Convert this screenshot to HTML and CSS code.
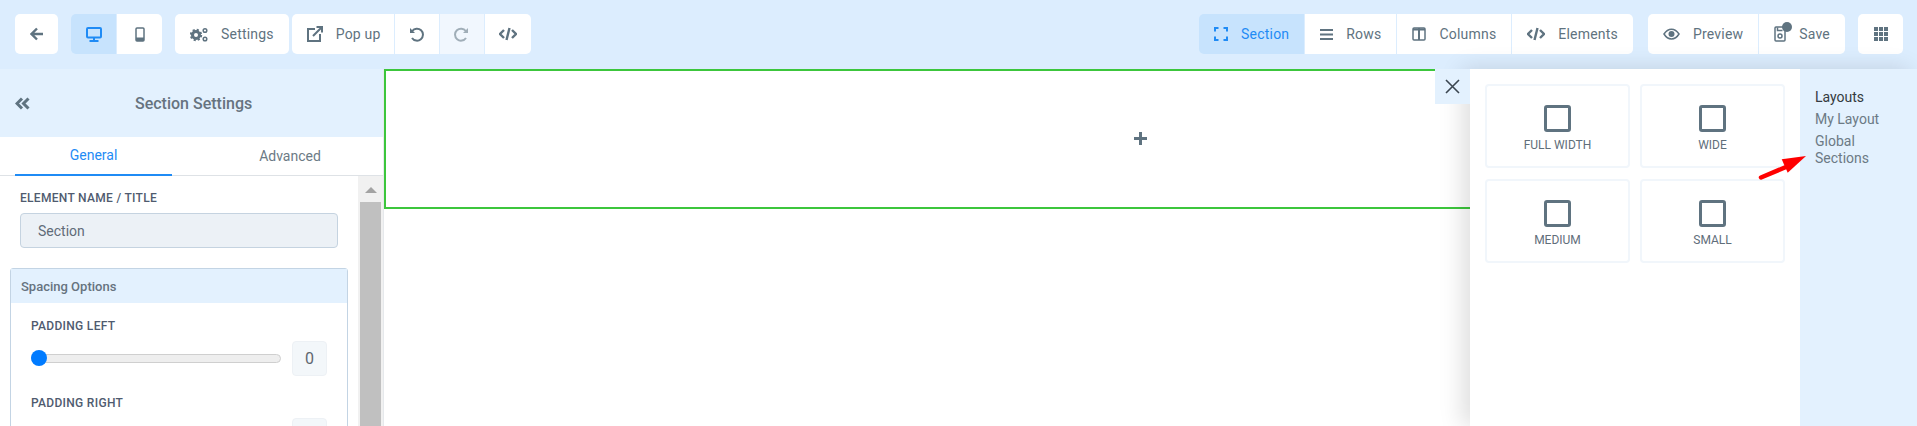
FILE: index.html
```html
<!DOCTYPE html>
<html lang="en">
<head>
    <meta charset="UTF-8">
    <title>Page Builder</title>
    <link rel="stylesheet" href="styles.css">
</head>
<body>

<header class="toolbar">
    <div class="group">
        <button class="tool icon-only narrow">
            <svg width="14" height="14" viewBox="0 0 14 14"><path d="M13 7H2M7 1.500 1.500 7 7 12.500" class="line heavy"/></svg>
        </button>
    </div>
    <div class="group">
        <button class="tool icon-only active">
            <svg width="16" height="15" viewBox="0 0 16 15"><rect x="1" y="1" width="14" height="9.500" rx="1" class="line thick"/><path d="M8 11v2M3.500 14h9" class="line thick"/></svg>
        </button>
        <button class="tool icon-only">
            <svg width="10" height="15" viewBox="0 0 10 15"><rect x="1" y="1" width="8" height="13" rx="1" class="line"/><rect x="1" y="10.500" width="8" height="3.500" fill="#5f7380"/></svg>
        </button>
    </div>
    <div class="group">
        <button class="tool">
            <svg width="18" height="15" viewBox="0 0 18 15"><circle cx="6" cy="8" r="3.500" class="line cog"/><circle cx="6" cy="8" r="5.200" class="teeth"/><circle cx="15" cy="3.500" r="1.800" class="line"/><circle cx="15" cy="12" r="1.800" class="line"/></svg>
            Settings
        </button>
    </div>
    <div class="group spaced">
        <button class="tool popup">
            <svg width="16" height="16" viewBox="0 0 16 16"><path d="M8 3H1v12h12V8" class="line thick"/><path d="M6 10l8-8M9.500 1H15v5.500" class="line thick"/></svg>
            Pop up
        </button>
        <button class="tool icon-only slim">
            <svg width="15" height="15" viewBox="0 0 15 15"><path d="M3.200 4A6 6 0 1 1 3 11" class="line thick"/><path d="M1 1v5h5z" fill="#5f7380"/></svg>
        </button>
        <button class="tool icon-only slim disabled">
            <svg width="15" height="15" viewBox="0 0 15 15"><path d="M11.800 4A6 6 0 1 0 12 11" class="line thick"/><path d="M14 1v5H9z" fill="#5f7380"/></svg>
        </button>
        <button class="tool icon-only wide">
            <svg width="18" height="14" viewBox="0 0 18 14"><path d="M5 3 1 7l4 4M13 3l4 4-4 4M10.500 1 7.500 13" class="line heavy"/></svg>
        </button>
    </div>

    <div class="group push">
        <button class="tool active">
            <svg width="14" height="14" viewBox="0 0 14 14"><path d="M1 4.500V1h3.500M9.500 1H13v3.500M13 9.500V13H9.500M4.500 13H1V9.500" class="line thick blue"/></svg>
            Section
        </button>
        <button class="tool">
            <svg width="13" height="13" viewBox="0 0 13 13"><path d="M0 2h13M0 6.500h13M0 11h13" class="line thick"/></svg>
            Rows
        </button>
        <button class="tool">
            <svg width="14" height="14" viewBox="0 0 14 14"><rect x="1" y="1" width="12" height="12" rx="1" class="line"/><path d="M1 2.500h12M7 1v12" class="line thick"/></svg>
            Columns
        </button>
        <button class="tool">
            <svg width="18" height="14" viewBox="0 0 18 14"><path d="M5 3 1 7l4 4M13 3l4 4-4 4M10.500 1 7.500 13" class="line heavy"/></svg>
            Elements
        </button>
    </div>
    <div class="group">
        <button class="tool">
            <svg width="17" height="12" viewBox="0 0 17 12"><path d="M1 6c4-6.500 11-6.500 15 0-4 6.500-11 6.500-15 0z" class="line"/><circle cx="8.500" cy="6" r="3" fill="#5f7380"/></svg>
            Preview
        </button>
        <button class="tool save">
            <svg width="12" height="16" viewBox="0 0 12 16"><rect x="1" y="1" width="10" height="14" rx="1" class="line"/><path d="M3.500 1.500v3h5" class="line"/><circle cx="6" cy="10" r="2" class="line"/></svg>
            <span class="dot"></span>
            Save
        </button>
    </div>
    <div class="group">
        <button class="tool icon-only">
            <svg width="14" height="14" viewBox="0 0 14 14" fill="#5f7380"><rect width="4" height="4"/><rect x="5" width="4" height="4"/><rect x="10" width="4" height="4"/><rect y="5" width="4" height="4"/><rect x="5" y="5" width="4" height="4"/><rect x="10" y="5" width="4" height="4"/><rect y="10" width="4" height="4"/><rect x="5" y="10" width="4" height="4"/><rect x="10" y="10" width="4" height="4"/></svg>
        </button>
    </div>
</header>

<div class="workspace">
    <aside class="settings">
        <div class="settings-head">
            <svg width="15" height="13" viewBox="0 0 15 13"><path d="M7 1.500 2 6.500l5 5M13.500 1.500l-5 5 5 5" class="line heavier"/></svg>
            <h2>Section Settings</h2>
        </div>
        <div class="tabs">
            <div class="tab current">General</div>
            <div class="tab">Advanced</div>
        </div>
        <div class="settings-body">
            <div class="fields">
                <label class="field-label">ELEMENT NAME / TITLE</label>
                <div class="text-input">Section</div>

                <div class="option-card">
                    <div class="option-title">Spacing Options</div>
                    <div class="option-body">
                        <label class="field-label">PADDING LEFT</label>
                        <div class="slider-row">
                            <div class="slider"><span class="thumb"></span></div>
                            <div class="value">0</div>
                        </div>
                        <label class="field-label">PADDING RIGHT</label>
                        <div class="slider-row">
                            <div class="slider"><span class="thumb"></span></div>
                            <div class="value"></div>
                        </div>
                    </div>
                </div>
            </div>
            <div class="scrollbar">
                <span class="scroll-up"></span>
                <span class="scroll-thumb"></span>
            </div>
        </div>
    </aside>

    <main class="canvas">
        <div class="section-box">
            <svg class="add" width="13" height="13" viewBox="0 0 13 13"><path d="M6.500 0v13M0 6.500h13" class="line cog"/></svg>
        </div>
    </main>

    <!-- Layout drawer sits over the canvas -->
    <div class="drawer">
        <button class="close">
            <svg width="15" height="15" viewBox="0 0 15 15"><path d="M1 1l13 13M14 1 1 14" class="line dark"/></svg>
        </button>
        <div class="layouts">
            <div class="layout-card"><span class="square"></span>FULL WIDTH</div>
            <div class="layout-card"><span class="square"></span>WIDE</div>
            <div class="layout-card"><span class="square"></span>MEDIUM</div>
            <div class="layout-card"><span class="square"></span>SMALL</div>
        </div>
        <nav class="layout-nav">
            <a class="selected">Layouts</a>
            <a>My Layout</a>
            <a>Global Sections</a>
        </nav>
        <svg class="arrow" width="50" height="30" viewBox="0 0 50 30"><path d="M3 25.500 28 15" stroke="#f00" stroke-width="4.500" stroke-linecap="round" fill="none"/><path d="M48 4 23.700 7.300 29.700 20.700z" fill="#f00"/></svg>
    </div>
</div>

</body>
</html>
```

FILE: styles.css
```css
* {
    box-sizing: border-box;
}
body {
    font-family: Roboto, Arial, sans-serif;
    margin: 0;
    padding: 0;
    width: 1917px;
    height: 426px;
    overflow: hidden;
    position: relative;
    background-color: white;
    color: #5f7380;
}
.line {
    fill: none;
    stroke: #5f7380;
    stroke-width: 1.5;
}
.line.thick {
    stroke-width: 2;
}
.line.heavy {
    stroke-width: 2.4;
}
.line.heavier {
    stroke-width: 3;
}
.line.cog {
    stroke-width: 3;
}
.line.dark {
    stroke: #3b4650;
    stroke-width: 1.6;
}
.teeth {
    fill: none;
    stroke: #5f7380;
    stroke-width: 2;
    stroke-dasharray: 2.1 2;
}

/* Top toolbar */
.toolbar {
    display: flex;
    align-items: center;
    gap: 13px;
    height: 69px;
    padding: 0 14px 1px 15px;
    background-color: #dcedfe;
}
.group {
    display: flex;
    gap: 1px;
    height: 40px;
    border-radius: 5px;
    overflow: hidden;
}
.group.spaced {
    margin-left: -10px;
}
.group.push {
    margin-left: auto;
    margin-right: 2px;
}
.tool {
    position: relative;
    display: flex;
    align-items: center;
    gap: 13px;
    height: 40px;
    padding: 0 15px;
    border: none;
    background-color: white;
    color: #5f7380;
    font-family: inherit;
    font-size: 14px;
    letter-spacing: 0.2px;
}
.tool.popup {
    padding-right: 13px;
}
.tool.icon-only {
    justify-content: center;
    width: 45px;
    padding: 0;
}
.tool.narrow {
    width: 43px;
}
.tool.slim {
    width: 44px;
}
.tool.wide {
    width: 46px;
}
.tool.active {
    background-color: #c7e3fd;
    color: #1f8bf5;
}
.tool.active .line {
    stroke: #1f8bf5;
}
.tool.disabled {
    background-color: #f1f7fe;
}
.tool.disabled svg {
    opacity: 0.55;
}
.save .dot {
    position: absolute;
    left: 23px;
    top: 8px;
    width: 10px;
    height: 10px;
    border-radius: 50%;
    background-color: #5f7380;
}

/* Workspace */
.workspace {
    display: flex;
    height: 357px;
}
.settings {
    display: flex;
    flex-direction: column;
    width: 384px;
    flex-shrink: 0;
    border-right: 1px solid #e6e9ec;
}
.settings-head {
    position: relative;
    display: flex;
    align-items: center;
    height: 68px;
    padding-left: 15px;
    background-color: #e3f1fe;
}
.settings-head h2 {
    margin: 0 0 0 105px;
    font-size: 16px;
    font-weight: 500;
    color: #66737f;
}
.tabs {
    display: flex;
    height: 39px;
    padding: 0 15px;
    border-bottom: 1px solid #dee2e6;
    font-size: 14px;
}
.tab {
    display: flex;
    align-items: center;
    justify-content: center;
    height: 39px;
    flex: 1;
    padding: 0 0 1px 40px;
    color: #6c7a85;
}
.tab.current {
    flex: 0 0 157px;
    padding-left: 0;
    color: #1f8bf5;
    border-bottom: 2px solid #1f8bf5;
}
.settings-body {
    display: flex;
    flex: 1;
    min-height: 0;
}
.fields {
    flex: 1;
    overflow: hidden;
    padding: 15px 10px 0;
}
.field-label {
    display: block;
    font-size: 12px;
    font-weight: 500;
    line-height: 14px;
    letter-spacing: 0.3px;
    color: #4f5b6f;
}
.text-input {
    display: flex;
    align-items: center;
    width: 318px;
    height: 35px;
    margin: 8px 0 20px 10px;
    padding-left: 17px;
    border: 1px solid #c5d3e0;
    border-radius: 4px;
    background-color: #ecf1f6;
    font-size: 14px;
    color: #606b78;
}
.fields > .field-label {
    margin-left: 10px;
}
.option-card {
    width: 338px;
    border: 1px solid #c3d4e4;
    border-radius: 3px 3px 0 0;
}
.option-title {
    display: flex;
    align-items: center;
    height: 34px;
    padding-left: 10px;
    background-color: #e3f1fe;
    font-size: 13px;
    font-weight: 500;
    color: #66737f;
}
.option-body {
    padding: 16px 20px 0;
}
.slider-row {
    display: flex;
    align-items: center;
    gap: 11px;
    margin: 8px 0 20px;
}
.slider {
    position: relative;
    width: 250px;
    height: 9px;
    border: 1px solid #cfcfcf;
    border-radius: 5px;
    background-color: #eee;
}
.thumb {
    position: absolute;
    left: -1px;
    top: -5px;
    width: 16px;
    height: 16px;
    border-radius: 50%;
    background-color: #007bff;
}
.value {
    display: flex;
    align-items: center;
    justify-content: center;
    width: 35px;
    height: 35px;
    border: 1px solid #edf1f5;
    border-radius: 4px;
    background-color: #f3f7fa;
    font-size: 16px;
    color: #5f6770;
}
.scrollbar {
    display: flex;
    flex-direction: column;
    align-items: center;
    width: 25px;
    padding: 0 2px;
    background-color: #f1f1f1;
}
.scroll-up {
    width: 0;
    height: 0;
    margin: 11px 0 9px;
    border-left: 6px solid transparent;
    border-right: 6px solid transparent;
    border-bottom: 6px solid #a3a3a3;
}
.scroll-thumb {
    flex: 1;
    width: 21px;
    background-color: #c0c0c0;
}
.canvas {
    flex: 1;
    min-width: 0;
}
.section-box {
    display: flex;
    align-items: center;
    justify-content: center;
    width: 1511px;
    height: 140px;
    padding-bottom: 2px;
    border-top: 2px solid #3cc63c;
    border-bottom: 2px solid #3cc63c;
    border-left: 2px solid #3cc63c;
}

/* Drawer */
.drawer {
    position: absolute;
    top: 69px;
    right: 0;
    display: flex;
    width: 447px;
    height: 357px;
    box-shadow: -8px 0 22px rgba(0, 0, 0, 0.13);
}
.close {
    position: absolute;
    left: -35px;
    top: 0;
    display: flex;
    align-items: center;
    justify-content: center;
    width: 35px;
    height: 35px;
    padding: 0;
    border: none;
    background-color: #e3f1fe;
}
.layouts {
    display: grid;
    grid-template-columns: 145px 145px;
    grid-auto-rows: 84px;
    gap: 11px 10px;
    width: 330px;
    padding: 15px;
    background-color: white;
}
.layout-card {
    display: flex;
    flex-direction: column;
    align-items: center;
    padding-top: 19px;
    border: 2px solid #f1f6fb;
    border-radius: 4px;
    font-size: 12px;
    color: #5f6e7a;
}
.square {
    width: 27px;
    height: 27px;
    margin-bottom: 6px;
    border: 3px solid #5f7380;
    border-radius: 3px;
}
.layout-nav {
    display: flex;
    flex-direction: column;
    gap: 5px;
    width: 117px;
    padding: 20px 15px;
    background-color: #e3f1fe;
    font-size: 14px;
    line-height: 17px;
    color: #6c7a85;
}
.layout-nav .selected {
    color: #343a40;
}
.arrow {
    position: absolute;
    left: 288px;
    top: 83px;
}
```
